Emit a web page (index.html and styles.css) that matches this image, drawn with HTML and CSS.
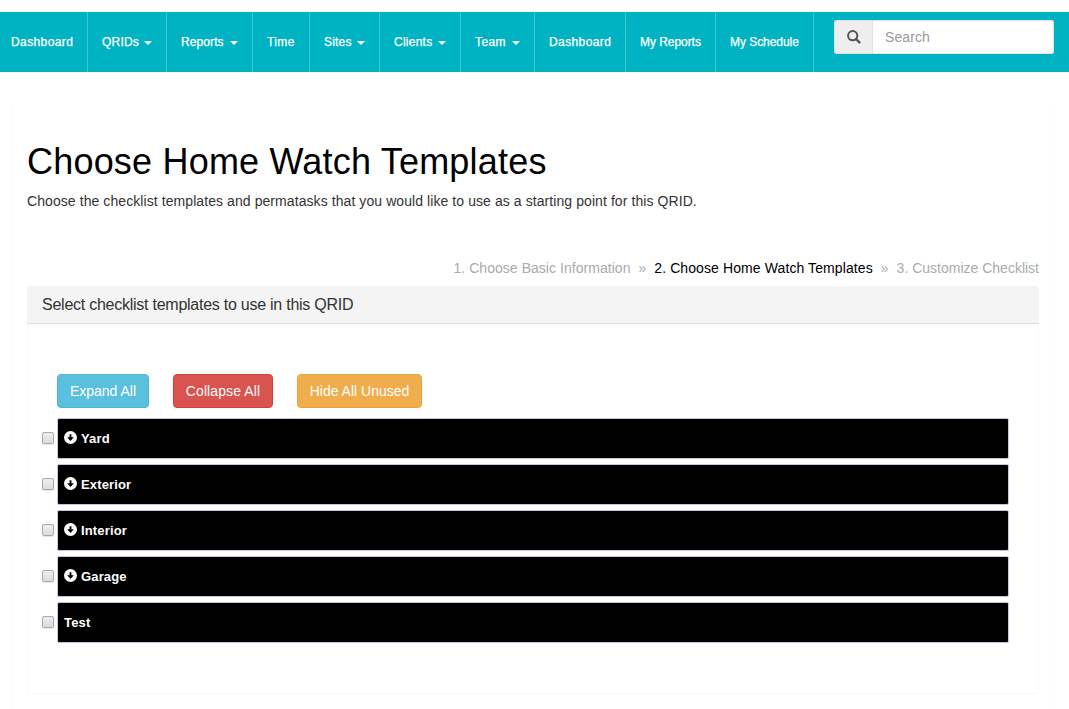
FILE: index.html
```html
<!DOCTYPE html>
<html lang="en">
<head>
<meta charset="utf-8">
<title>Choose Home Watch Templates</title>
<link rel="stylesheet" href="styles.css">
</head>
<body>
<svg class="defs" aria-hidden="true">
  <symbol id="arrow-down" viewBox="0 0 14 14">
    <circle cx="7" cy="7" r="7" fill="#fff"/>
    <path d="M6 3.5h2v3.3h2.6L7 10.7 3.4 6.8H6z" fill="#000"/>
  </symbol>
</svg>
<nav class="navbar">
  <a class="nav-item first wide-text">Dashboard</a>
  <a class="nav-item qrids">QRIDs<b class="caret"></b></a>
  <a class="nav-item reports">Reports<b class="caret"></b></a>
  <a class="nav-item time">Time</a>
  <a class="nav-item sites">Sites<b class="caret"></b></a>
  <a class="nav-item clients">Clients<b class="caret"></b></a>
  <a class="nav-item team">Team<b class="caret"></b></a>
  <a class="nav-item dashboard wide-text">Dashboard</a>
  <a class="nav-item my-reports">My Reports</a>
  <a class="nav-item my-schedule">My Schedule</a>
  <div class="search">
    <span class="search-addon">
      <svg width="14" height="14" viewBox="0 0 14 14"><circle cx="5.7" cy="5.7" r="4.6" fill="none" stroke="#555" stroke-width="2"/><path d="M9 9l3.4 3.4" stroke="#555" stroke-width="2.4" stroke-linecap="round"/></svg>
    </span>
    <input class="search-input" type="text" placeholder="Search">
  </div>
</nav>
<main class="content">
  <h1 class="title">Choose Home Watch Templates</h1>
  <p class="lead">Choose the checklist templates and permatasks that you would like to use as a starting point for this QRID.</p>
  <div class="steps"><span class="previous">1. Choose Basic Information</span><span class="sep">»</span><span class="current">2. Choose Home Watch Templates</span><span class="sep">»</span><span>3. Customize Checklist</span></div>
  <section class="panel">
    <header class="panel-heading">Select checklist templates to use in this QRID</header>
    <div class="panel-body">
      <div class="buttons">
        <button class="btn info">Expand All</button>
        <button class="btn danger">Collapse All</button>
        <button class="btn warning">Hide All Unused</button>
      </div>
      <div class="row"><input class="check" type="checkbox"><div class="bar"><svg class="icon"><use href="#arrow-down"/></svg>Yard</div></div>
      <div class="row"><input class="check" type="checkbox"><div class="bar"><svg class="icon"><use href="#arrow-down"/></svg>Exterior</div></div>
      <div class="row"><input class="check" type="checkbox"><div class="bar"><svg class="icon"><use href="#arrow-down"/></svg>Interior</div></div>
      <div class="row"><input class="check" type="checkbox"><div class="bar"><svg class="icon"><use href="#arrow-down"/></svg>Garage</div></div>
      <div class="row"><input class="check" type="checkbox"><div class="bar">Test</div></div>
    </div>
  </section>
</main>
</body>
</html>
```
FILE: styles.css
```css
* { box-sizing: border-box; }
body {
  margin: 0;
  height: 709px;
  overflow: hidden;
  padding-top: 12px;
  background: #fff;
  color: #333;
  font: 14px/20px "Liberation Sans", Arial, sans-serif;
}
.defs { display: none; }
.navbar { display: flex; height: 60px; background: #00b3c3; }
.nav-item {
  display: flex;
  flex: none;
  align-items: center;
  padding: 0 14px;
  border-right: 1px solid #40c6d2;
  color: #fff;
  font-size: 12px;
  white-space: nowrap;
  -webkit-text-stroke: .25px #fff;
}
.first { width: 88px; padding-left: 11px; }
.wide-text { letter-spacing: .4px; }
.qrids { width: 79px; letter-spacing: .2px; }
.reports { width: 86px; letter-spacing: .1px; }
.time { width: 57px; letter-spacing: .4px; }
.sites { width: 70px; letter-spacing: .2px; }
.clients { width: 81px; letter-spacing: .25px; }
.team { width: 74px; letter-spacing: .4px; }
.dashboard { width: 91px; }
.my-reports { width: 90px; letter-spacing: -.05px; }
.my-schedule { width: 98px; letter-spacing: -.05px; }
.caret {
  margin: 2px 0 0 auto;
  border-top: 4px solid #fff;
  border-right: 4px solid transparent;
  border-left: 4px solid transparent;
}
.search { display: flex; width: 220px; height: 34px; margin: 8px 0 0 20px; }
.search-addon {
  display: flex;
  align-items: center;
  justify-content: center;
  width: 38px;
  border: 1px solid #e2e2e4;
  border-right: 0;
  border-radius: 3px 0 0 3px;
  background: #eee;
}
.search-input {
  flex: 1;
  min-width: 0;
  padding: 0 12px;
  border: 1px solid #e2e2e4;
  border-radius: 0 2px 2px 0;
  background: #fff;
  font: 14px "Liberation Sans", Arial, sans-serif;
  letter-spacing: .1px;
}
.search-input::placeholder { color: #999; }
.content {
  height: 620px;
  margin: 32px 14px 0 11px;
  padding: 38px 15px 0;
  border: solid #fcfcfc;
  border-width: 0 1px;
}
.title { margin: 0; color: #000; font-size: 36px; font-weight: 400; line-height: 40px; letter-spacing: .2px; }
.lead { margin: 9px 0 0; letter-spacing: .078px; }
.steps { display: flex; justify-content: flex-end; margin-top: 47px; color: #aaa; white-space: nowrap; }
.sep { margin: 0 8px; }
.previous { letter-spacing: .04px; }
.current { color: #000; letter-spacing: .1px; }
.panel {
  height: 408px;
  margin-top: 8px;
  border: 1px solid #fafafa;
  border-width: 0 1px 1px;
  border-radius: 4px;
  box-shadow: 0 1px 1px rgba(0, 0, 0, .02);
}
.panel-heading {
  height: 38px;
  margin: 0 -1px;
  padding: 0 15px;
  border-bottom: 1px solid #ddd;
  border-radius: 3px 3px 0 0;
  background: #f4f4f4;
  font-size: 16px;
  letter-spacing: -.25px;
  line-height: 37px;
}
.panel-body { padding: 50px 29px 0 14px; }
.buttons { display: flex; gap: 24px; margin: 0 0 10px 15px; }
.btn { height: 34px; padding: 0; border: 1px solid; border-radius: 4px; color: #fff; font: inherit; }
.info { width: 92px; background: #5bc0de; border-color: #46b8da; }
.danger { width: 100px; background: #d9534f; border-color: #d43f3a; letter-spacing: .1px; }
.warning { width: 125px; background: #f0ad4e; border-color: #eea236; }
.row { display: flex; align-items: center; gap: 3px; margin-bottom: 5px; }
.check {
  appearance: none;
  width: 12px;
  height: 12px;
  margin: 0 0 2px;
  border: 1px solid #aaa;
  border-radius: 2px;
  background: linear-gradient(#eee, #dcdcdc);
  box-shadow: 0 1px 1px rgba(0, 0, 0, .1);
}
.bar {
  display: flex;
  flex: 1;
  align-items: center;
  gap: 4px;
  height: 41px;
  padding: 0 6px;
  border: 1px solid #c5c5dc;
  border-radius: 2px;
  background: #000;
  color: #fff;
  font-size: 13px;
  font-weight: 700;
  letter-spacing: .15px;
}
.icon { width: 13px; height: 13px; margin-bottom: 2px; }
```
